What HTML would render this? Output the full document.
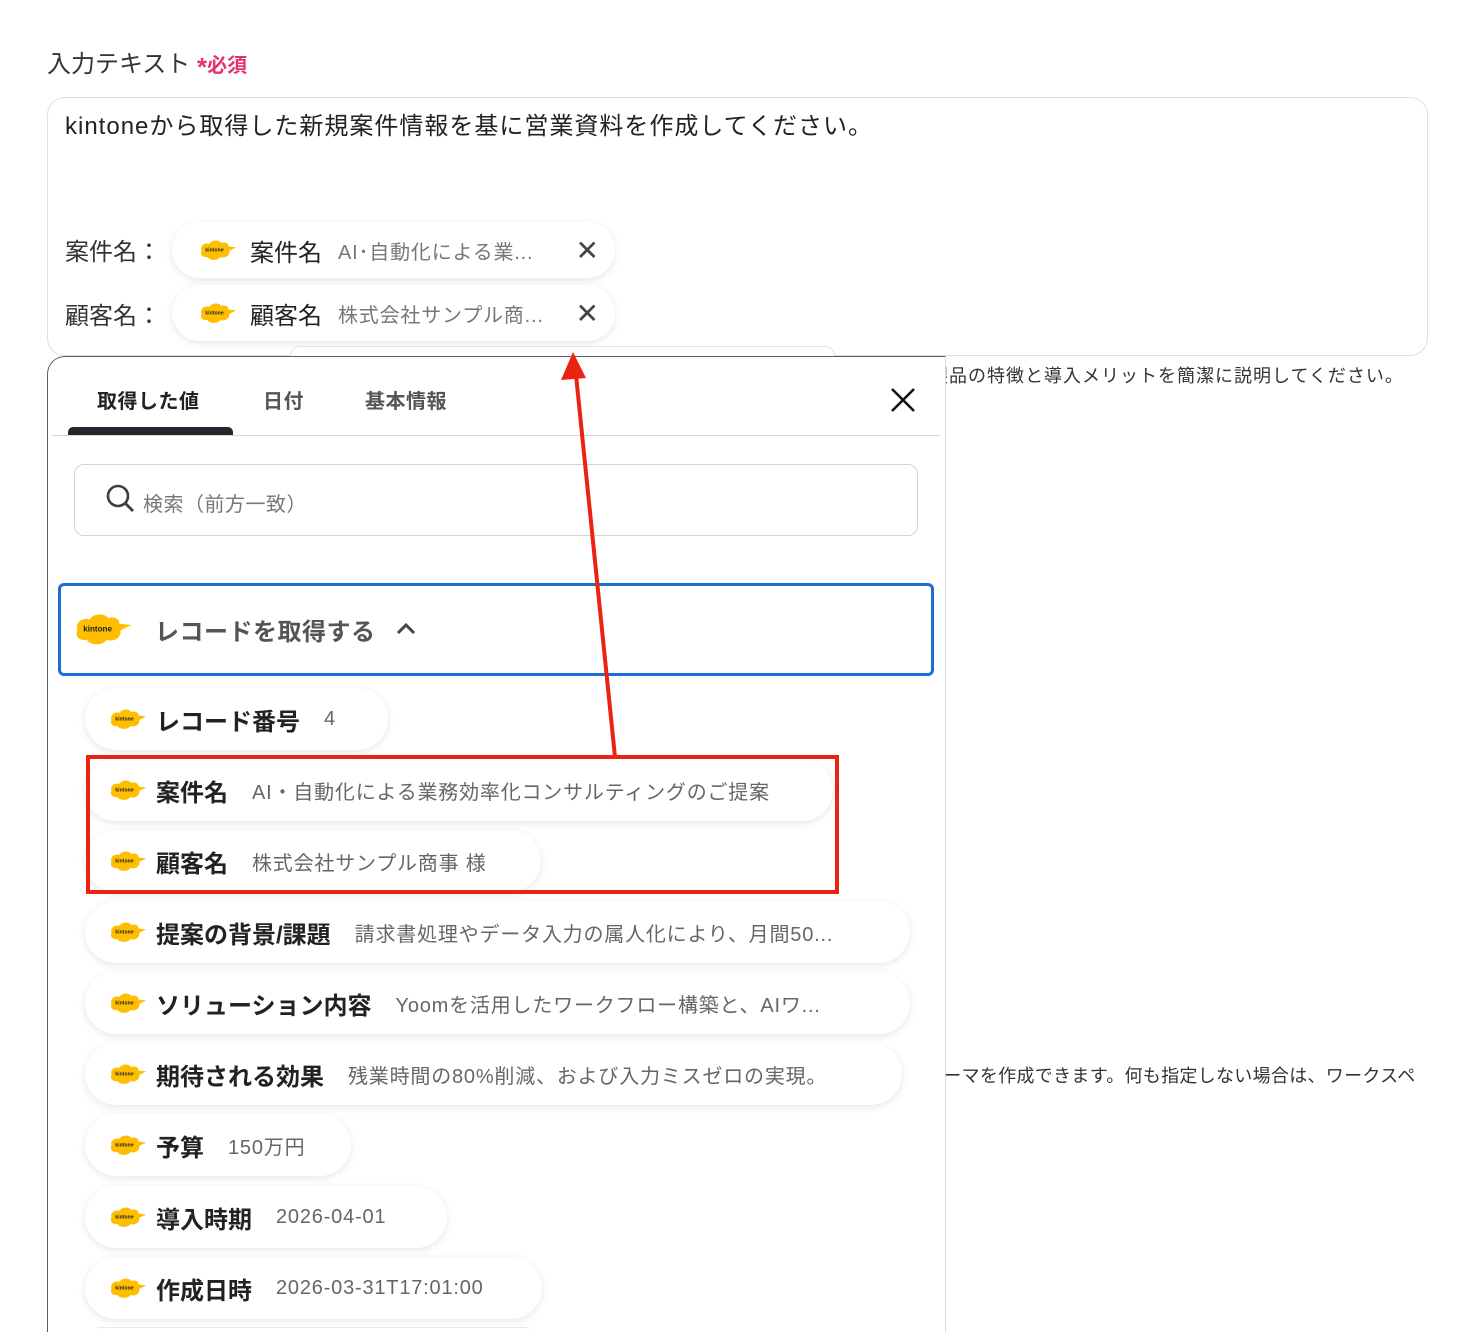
<!DOCTYPE html>
<html><head><meta charset="utf-8"><style>
*{box-sizing:border-box;margin:0;padding:0}
html{width:1472px;height:1332px;overflow:hidden}
body{width:1472px;height:1332px;overflow:hidden;background:#fff;position:relative;font-family:"Liberation Sans","Noto Sans CJK JP",sans-serif;color:#333}
.abs{position:absolute}
.lbl{left:47px;top:44px;font-size:24px;color:#333;white-space:nowrap}
.req{color:#e5326a;font-size:20px;font-weight:bold}
.ta{left:47px;top:97px;width:1381px;height:259px;border:1px solid #dcdfe4;border-radius:18px}
.t1{left:65px;top:106px;font-size:24px;color:#222;white-space:nowrap;letter-spacing:1px}
.pl{font-size:24px;color:#333;left:65px;white-space:nowrap}
.chip{position:absolute;background:#fff;border-radius:32px;box-shadow:0 2px 8px rgba(0,0,0,.10);display:flex;align-items:center;white-space:nowrap}
.chip .k{font-weight:bold;font-size:24px;color:#222}
.chip .v{font-size:20px;color:#666;margin-left:24px;letter-spacing:0.8px}
.chip svg{flex:none}
.bg{font-size:18px;color:#333;white-space:nowrap;letter-spacing:1px}
.panel{left:47px;top:356px;width:899px;height:976px;background:#fff;border:1px solid #5a6069;border-bottom:none;border-radius:18px 0 0 0;border-right-color:#d5d8dd}
.tab{top:385px;font-size:20px;color:#555;font-weight:bold;letter-spacing:0.5px}
</style></head><body>
<svg width="0" height="0" style="position:absolute"><defs>
<g id="kt"><path d="M4 14 C2 8 8 4 13 6 C16 1 24 1 27 5 C31 3 36 6 35 9 L44 10 L36 14 C37 19 31 23 26 21 C22 26 13 25 11 21 C5 22 2 18 4 14Z" fill="#ffbe00"/><text x="19" y="15" font-size="6" font-family="Liberation Sans" font-weight="bold" fill="#222" text-anchor="middle">kintone</text></g>
</defs></svg>

<div class="abs lbl">入力テキスト <span class="req"><span style="font-size:26px;position:relative;top:4px">*</span>必須</span></div>
<div class="abs ta"></div>
<div class="abs t1">kintoneから取得した新規案件情報を基に営業資料を作成してください。</div>
<div class="abs pl" style="top:232px">案件名：</div>
<div class="abs pl" style="top:296px">顧客名：</div>
<div class="chip" style="left:172px;top:222px;width:443px;height:56px;padding-left:26px">
<svg width="40" height="28" viewBox="0 0 46 26"><use href="#kt"/></svg>
<span style="font-size:24px;color:#222;margin-left:12px">案件名</span><span style="font-size:20px;color:#777;margin-left:16px;letter-spacing:0.8px">AI･自動化による業...</span>
<span style="position:absolute;right:16px;top:12px;font-size:28px;color:#444">✕</span></div>
<div class="chip" style="left:172px;top:285px;width:443px;height:56px;padding-left:26px">
<svg width="40" height="28" viewBox="0 0 46 26"><use href="#kt"/></svg>
<span style="font-size:24px;color:#222;margin-left:12px">顧客名</span><span style="font-size:20px;color:#777;margin-left:16px;letter-spacing:0.8px">株式会社サンプル商...</span>
<span style="position:absolute;right:16px;top:12px;font-size:28px;color:#444">✕</span></div>
<div class="abs" style="left:290px;top:346px;width:545px;height:20px;border-radius:20px;border:1px solid #e2e4e8;background:#fff"></div>

<div class="abs bg" style="left:930px;top:362px">製品の特徴と導入メリットを簡潔に説明してください。</div>
<div class="abs bg" style="left:925px;top:1062px;letter-spacing:0.3px">テーマを作成できます。何も指定しない場合は、ワークスペ</div>

<div class="abs panel"></div>
<div class="abs tab" style="left:97px;color:#222">取得した値</div>
<div class="abs tab" style="left:263px">日付</div>
<div class="abs tab" style="left:365px">基本情報</div>
<div class="abs" style="left:68px;top:427px;width:165px;height:9px;background:#24282e;border-radius:5px 5px 0 0"></div>
<div class="abs" style="left:52px;top:435px;width:888px;height:1px;background:#d5d8dd"></div>
<svg class="abs" style="left:889px;top:386px" width="28" height="28" viewBox="0 0 28 28"><path d="M3 3L25 25M25 3L3 25" stroke="#111" stroke-width="2.6"/></svg>
<div class="abs" style="left:74px;top:464px;width:844px;height:72px;border:1px solid #d0d4da;border-radius:10px"></div>
<svg class="abs" style="left:106px;top:484px" width="30" height="30" viewBox="0 0 30 30"><circle cx="12" cy="12" r="10" fill="none" stroke="#3a3f46" stroke-width="2.6"/><path d="M19 19L27 27" stroke="#3a3f46" stroke-width="2.8"/></svg>
<div class="abs" style="left:143px;top:488px;font-size:20px;color:#777;letter-spacing:0.5px">検索（前方一致）</div>

<div class="abs" style="left:58px;top:583px;width:876px;height:93px;border:3px solid #1a6fd6;border-radius:6px"></div>
<svg class="abs" style="left:72px;top:606px" width="62" height="46" viewBox="0 0 46 26"><use href="#kt"/></svg>
<div class="abs" style="left:155px;top:612px;font-size:24px;color:#555;font-weight:bold;letter-spacing:0.5px">レコードを取得する</div>
<svg class="abs" style="left:395px;top:620px" width="22" height="16" viewBox="0 0 22 16"><path d="M3 13L11 5L19 13" stroke="#444" stroke-width="3" fill="none"/></svg>

<div class="chip" style="left:85px;top:688px;width:303px;height:62px;padding-left:23px"><svg width="40" height="28" viewBox="0 0 46 26"><use href="#kt"/></svg><span class="k" style="margin-left:8px">レコード番号</span><span class="v">4</span></div>
<div class="chip" style="left:85px;top:759px;width:748px;height:62px;padding-left:23px"><svg width="40" height="28" viewBox="0 0 46 26"><use href="#kt"/></svg><span class="k" style="margin-left:8px">案件名</span><span class="v">AI・自動化による業務効率化コンサルティングのご提案</span></div>
<div class="chip" style="left:85px;top:830px;width:456px;height:62px;padding-left:23px"><svg width="40" height="28" viewBox="0 0 46 26"><use href="#kt"/></svg><span class="k" style="margin-left:8px">顧客名</span><span class="v">株式会社サンプル商事 様</span></div>
<div class="chip" style="left:85px;top:901px;width:825px;height:62px;padding-left:23px"><svg width="40" height="28" viewBox="0 0 46 26"><use href="#kt"/></svg><span class="k" style="margin-left:8px">提案の背景/課題</span><span class="v">請求書処理やデータ入力の属人化により、月間50...</span></div>
<div class="chip" style="left:85px;top:972px;width:825px;height:62px;padding-left:23px"><svg width="40" height="28" viewBox="0 0 46 26"><use href="#kt"/></svg><span class="k" style="margin-left:8px">ソリューション内容</span><span class="v">Yoomを活用したワークフロー構築と、AIワ...</span></div>
<div class="chip" style="left:85px;top:1043px;width:817px;height:62px;padding-left:23px"><svg width="40" height="28" viewBox="0 0 46 26"><use href="#kt"/></svg><span class="k" style="margin-left:8px">期待される効果</span><span class="v">残業時間の80%削減、および入力ミスゼロの実現。</span></div>
<div class="chip" style="left:85px;top:1114px;width:266px;height:62px;padding-left:23px"><svg width="40" height="28" viewBox="0 0 46 26"><use href="#kt"/></svg><span class="k" style="margin-left:8px">予算</span><span class="v">150万円</span></div>
<div class="chip" style="left:85px;top:1186px;width:362px;height:62px;padding-left:23px"><svg width="40" height="28" viewBox="0 0 46 26"><use href="#kt"/></svg><span class="k" style="margin-left:8px">導入時期</span><span class="v">2026-04-01</span></div>
<div class="chip" style="left:85px;top:1257px;width:457px;height:62px;padding-left:23px"><svg width="40" height="28" viewBox="0 0 46 26"><use href="#kt"/></svg><span class="k" style="margin-left:8px">作成日時</span><span class="v">2026-03-31T17:01:00</span></div>
<div class="abs" style="left:95px;top:1327px;width:437px;height:5px;border-top:1px solid #e6e8eb;border-radius:20px 20px 0 0"></div>

<div class="abs" style="left:86px;top:755px;width:753px;height:139px;border:4px solid #ea2410"></div>
<svg class="abs" style="left:0;top:0" width="1472" height="1332"><path d="M615 757L576 375" stroke="#ea2410" stroke-width="4"/><path d="M573 352L561 380L586 378Z" fill="#ea2410"/></svg>
</body></html>
